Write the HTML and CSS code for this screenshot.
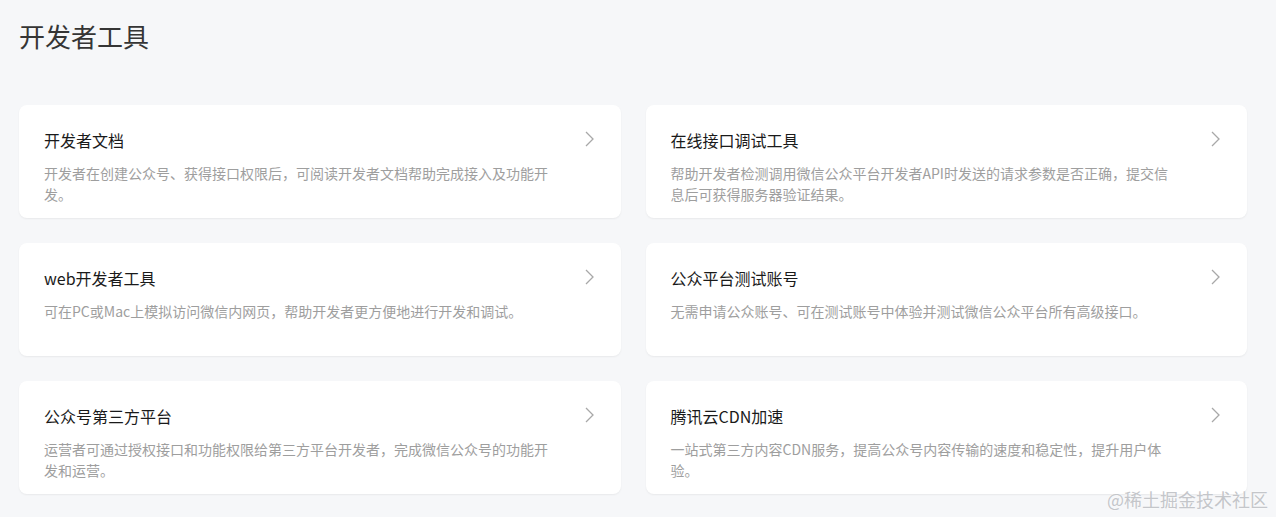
FILE: index.html
```html
<!DOCTYPE html>
<html lang="zh-CN">
<head>
<meta charset="utf-8">
<title>开发者工具</title>
<link rel="stylesheet" href="styles.css">
</head>
<body>
<div class="page">
  <h1 class="page-title">开发者工具</h1>
  <div class="grid">
    <a class="card">
      <div class="card-title">开发者文档</div>
      <div class="card-desc">开发者在创建公众号、获得接口权限后，可阅读开发者文档帮助完成接入及功能开发。</div>
      <svg class="chev" viewBox="0 0 9 16" width="9" height="16"><path d="M1 1 L8 8 L1 15" fill="none" stroke="#a8a8a8" stroke-width="1.3"/></svg>
    </a>
    <a class="card">
      <div class="card-title">在线接口调试工具</div>
      <div class="card-desc">帮助开发者检测调用微信公众平台开发者API时发送的请求参数是否正确，提交信息后可获得服务器验证结果。</div>
      <svg class="chev" viewBox="0 0 9 16" width="9" height="16"><path d="M1 1 L8 8 L1 15" fill="none" stroke="#a8a8a8" stroke-width="1.3"/></svg>
    </a>
    <a class="card">
      <div class="card-title">web开发者工具</div>
      <div class="card-desc">可在PC或Mac上模拟访问微信内网页，帮助开发者更方便地进行开发和调试。</div>
      <svg class="chev" viewBox="0 0 9 16" width="9" height="16"><path d="M1 1 L8 8 L1 15" fill="none" stroke="#a8a8a8" stroke-width="1.3"/></svg>
    </a>
    <a class="card">
      <div class="card-title">公众平台测试账号</div>
      <div class="card-desc">无需申请公众账号、可在测试账号中体验并测试微信公众平台所有高级接口。</div>
      <svg class="chev" viewBox="0 0 9 16" width="9" height="16"><path d="M1 1 L8 8 L1 15" fill="none" stroke="#a8a8a8" stroke-width="1.3"/></svg>
    </a>
    <a class="card">
      <div class="card-title">公众号第三方平台</div>
      <div class="card-desc">运营者可通过授权接口和功能权限给第三方平台开发者，完成微信公众号的功能开发和运营。</div>
      <svg class="chev" viewBox="0 0 9 16" width="9" height="16"><path d="M1 1 L8 8 L1 15" fill="none" stroke="#a8a8a8" stroke-width="1.3"/></svg>
    </a>
    <a class="card">
      <div class="card-title">腾讯云CDN加速</div>
      <div class="card-desc">一站式第三方内容CDN服务，提高公众号内容传输的速度和稳定性，提升用户体验。</div>
      <svg class="chev" viewBox="0 0 9 16" width="9" height="16"><path d="M1 1 L8 8 L1 15" fill="none" stroke="#a8a8a8" stroke-width="1.3"/></svg>
    </a>
  </div>
</div>
<div class="watermark">@稀土掘金技术社区</div>
</body>
</html>
```

FILE: styles.css
```css
html, body {
  margin: 0;
  padding: 0;
  background: #f6f7f9;
  font-family: "Noto Sans CJK SC", "Noto Sans", sans-serif;
  height: 517px;
  overflow: hidden;
}

.page {
  padding: 18px 29px 0 19px;
}

.page-title {
  margin: 0;
  font-size: 26px;
  line-height: 36px;
  font-weight: 400;
  color: #353535;
}

.grid {
  margin-top: 51px;
  display: grid;
  grid-template-columns: 1fr 1fr;
  grid-auto-rows: 113px;
  column-gap: 25px;
  row-gap: 25px;
}

.card {
  position: relative;
  display: block;
  background: #fff;
  border-radius: 8px;
  box-shadow: 0 1px 2px rgba(0, 0, 0, 0.06);
  padding: 23px 25px 0 25px;
  box-sizing: border-box;
  text-decoration: none;
}

.card-title {
  font-size: 16px;
  line-height: 24px;
  color: #1a1a1a;
}

.card-desc {
  margin-top: 11px;
  width: 504.5px;
  font-size: 14px;
  line-height: 21px;
  color: #9e9e9e;
}

.chev {
  position: absolute;
  top: 26px;
  right: 27px;
}

.watermark {
  position: absolute;
  right: 8px;
  bottom: 6px;
  font-size: 18px;
  line-height: 24px;
  color: #c4c6ca;
  font-family: "Noto Sans CJK SC", serif;
  text-shadow: 0 0 2px #fff;
}
```
